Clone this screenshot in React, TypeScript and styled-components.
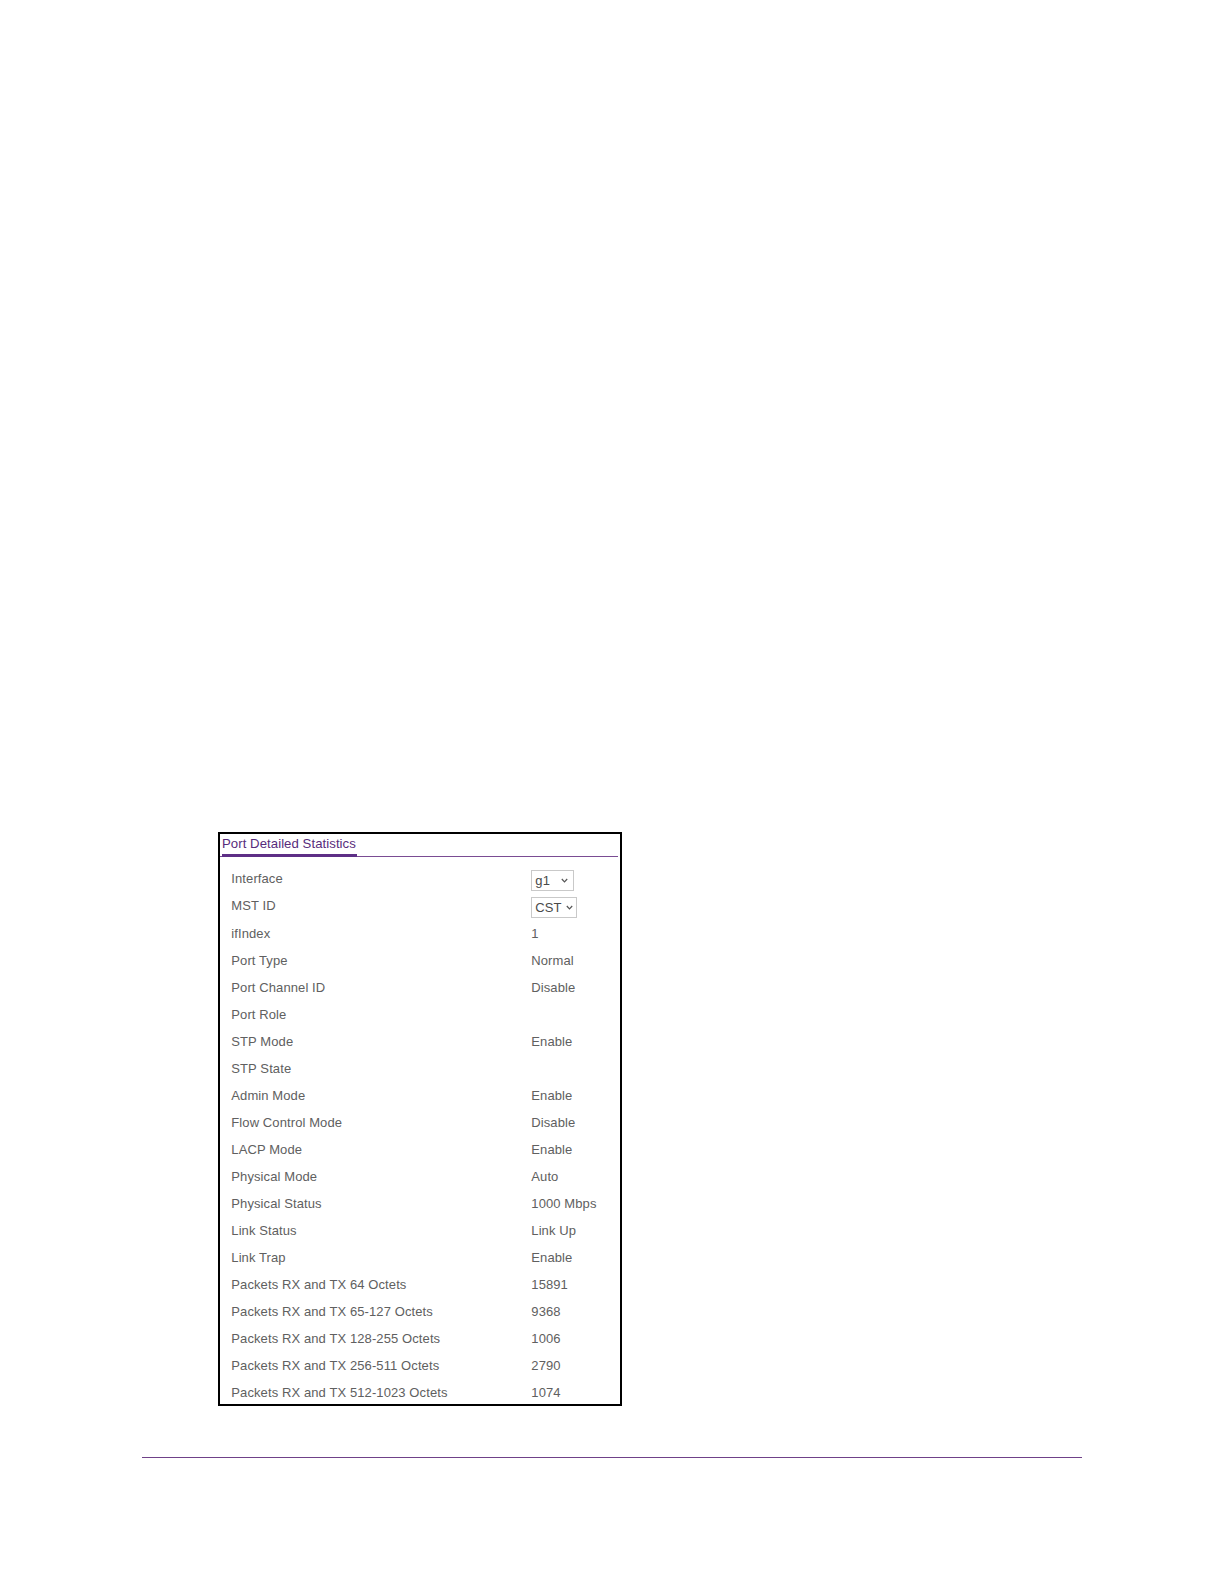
import React from "react";
import styled, { createGlobalStyle } from "styled-components";

const Global = createGlobalStyle`
  html, body { margin: 0; padding: 0; background: #fff; }
  body { font-family: "Liberation Sans", Arial, sans-serif; }
`;

const Page = styled.div`
  width: 1224px;
  height: 1584px;
  display: flex;
  flex-direction: column;
  padding-top: 832px;
  box-sizing: border-box;
`;

const Panel = styled.section`
  margin-left: 218px;
  width: 404px;
  height: 574px;
  box-sizing: border-box;
  border: 2px solid #000;
  display: flex;
  flex-direction: column;
`;

const Header = styled.div`
  display: flex;
  padding-left: 2px;
  margin-right: 2px;
  border-bottom: 1px solid #7a4c93;
`;

const Tab = styled.div`
  font-size: 13.2px;
  line-height: 20px;
  color: #572c7c;
  border-bottom: 3px solid #5e2f86;
  margin-bottom: -1px;
  padding-right: 1px;
  letter-spacing: 0.05px;
`;

const Rows = styled.div`
  display: grid;
  grid-template-columns: 300px 1fr;
  grid-auto-rows: 27.05px;
  padding: 8.4px 0 0 11.3px;
  color: #606060;
  font-size: 13px;
  letter-spacing: 0.1px;
`;

const Label = styled.div`
  display: flex;
  align-items: center;
  white-space: nowrap;
`;

const Value = styled.div`
  display: flex;
  align-items: center;
  white-space: nowrap;
`;

const SelectBox = styled.div<{ $w: number }>`
  width: ${(p) => p.$w}px;
  height: 21px;
  box-sizing: border-box;
  border: 1px solid #c9c9c9;
  display: flex;
  align-items: center;
  gap: 4px;
  padding: 0 5px 0 3px;
  font-size: 13px;
  color: #4a4a4a;
  margin-top: 3px;
`;

const ChevronWrap = styled.span`
  margin-left: auto;
  display: flex;
  align-items: center;
`;

const Chevron = () => (
  <svg width="7" height="5" viewBox="0 0 7 5">
    <path d="M0.8 1 L3.5 3.8 L6.2 1" fill="none" stroke="#555" strokeWidth="1.2" />
  </svg>
);

const Footer = styled.div`
  margin-top: 51px;
  margin-left: 141.5px;
  width: 940px;
  height: 1px;
  background: #6f4188;
`;

type Row = { label: string; value?: string; select?: { text: string; w: number } };

const rows: Row[] = [
  { label: "Interface", select: { text: "g1", w: 43 } },
  { label: "MST ID", select: { text: "CST", w: 46 } },
  { label: "ifIndex", value: "1" },
  { label: "Port Type", value: "Normal" },
  { label: "Port Channel ID", value: "Disable" },
  { label: "Port Role", value: "" },
  { label: "STP Mode", value: "Enable" },
  { label: "STP State", value: "" },
  { label: "Admin Mode", value: "Enable" },
  { label: "Flow Control Mode", value: "Disable" },
  { label: "LACP Mode", value: "Enable" },
  { label: "Physical Mode", value: "Auto" },
  { label: "Physical Status", value: "1000 Mbps" },
  { label: "Link Status", value: "Link Up" },
  { label: "Link Trap", value: "Enable" },
  { label: "Packets RX and TX 64 Octets", value: "15891" },
  { label: "Packets RX and TX 65-127 Octets", value: "9368" },
  { label: "Packets RX and TX 128-255 Octets", value: "1006" },
  { label: "Packets RX and TX 256-511 Octets", value: "2790" },
  { label: "Packets RX and TX 512-1023 Octets", value: "1074" },
];

export default function App() {
  return (
    <>
      <Global />
      <Page>
        <Panel>
          <Header>
            <Tab>Port Detailed Statistics</Tab>
          </Header>
          <Rows>
            {rows.map((r) => (
              <React.Fragment key={r.label}>
                <Label>{r.label}</Label>
                <Value>
                  {r.select ? (
                    <SelectBox $w={r.select.w}>
                      <span>{r.select.text}</span>
                      <ChevronWrap>
                        <Chevron />
                      </ChevronWrap>
                    </SelectBox>
                  ) : (
                    r.value
                  )}
                </Value>
              </React.Fragment>
            ))}
          </Rows>
        </Panel>
        <Footer />
      </Page>
    </>
  );
}
